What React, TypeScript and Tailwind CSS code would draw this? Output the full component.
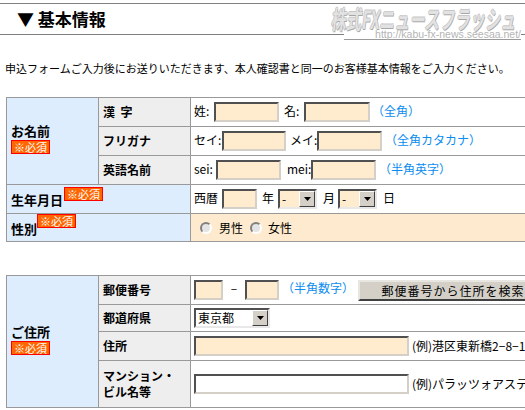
import React from 'react';

const jp = "font-['Noto_Sans_CJK_JP','Noto_Sans',sans-serif]";

const Badge: React.FC<{ className?: string }> = ({ className = '' }) => (
  <span
    className={`inline-block h-[14px] px-[2px] bg-[#ff6600] border border-[#ff0000] text-white text-[11px] leading-[12px] font-normal align-top ${className}`}
  >
    ※必須
  </span>
);

const TextBox: React.FC<{ w: string; white?: boolean }> = ({ w, white }) => (
  <span
    className={`inline-block h-[20px] ${w} ${white ? 'bg-white' : 'bg-[#ffebcd]'} border-2 border-t-[#505050] border-l-[#505050] border-b-[#d4d0c8] border-r-[#d4d0c8] align-middle`}
  />
);

const FakeSelect: React.FC<{ w: string; value: string; white?: boolean }> = ({ w, value, white }) => (
  <span
    className={`inline-flex items-stretch h-[20px] ${w} ${white ? 'bg-white' : 'bg-[#ffebcd]'} border-2 border-t-[#505050] border-l-[#505050] border-b-[#e8e8e8] border-r-[#e8e8e8] align-middle`}
  >
    <span className="flex-1 pl-[2px] text-[12px] leading-[16px] overflow-hidden whitespace-nowrap">{value}</span>
    <span className="w-[16px] bg-[#d4d0c8] border border-t-white border-l-white border-b-[#404040] border-r-[#404040] flex items-center justify-center">
      <svg width="7" height="4" viewBox="0 0 7 4">
        <path d="M0 0h7L3.5 4z" fill="#000" />
      </svg>
    </span>
  </span>
);

const Radio: React.FC = () => (
  <span className="inline-block w-[12px] h-[12px] rounded-full bg-[#e4e4e4] border-2 border-t-[#808080] border-l-[#808080] border-b-white border-r-white align-middle" />
);

const Note: React.FC<{ children: React.ReactNode; className?: string }> = ({ children, className = '' }) => (
  <span className={`text-[#0a8cf0] ${className}`}>{children}</span>
);

const labelCell = 'bg-[#eeeeee] border border-[#999999] pl-[4px] text-[12px] font-bold align-middle';
const headCell = 'bg-[#ddedfd] border border-[#999999] pl-[4px] text-[13px] font-bold align-middle';
const valueCell = 'border border-[#999999] pl-[3px] text-[12px] align-middle whitespace-nowrap';

export default function App() {
  return (
    <div className={`relative w-[525px] h-[410px] overflow-hidden bg-white text-black ${jp}`}>
      {/* title bar */}
      <div className="pt-[3px]">
        <div className="h-[32px] border-y border-[#808080] flex items-center pl-[17px]">
          <span className="text-[17px] leading-[18px] font-bold">▼ 基本情報</span>
        </div>
      </div>

      {/* site logo */}
      <div className="absolute left-[332px] top-[4px] w-[193px] h-[37px] pointer-events-none">
        <div className="h-[28px] whitespace-nowrap">
          <span className="inline-block origin-left scale-x-[0.61] -skew-x-12 text-[25px] leading-[28px] font-bold text-[#e2e2e2] [text-shadow:1px_1px_0_#a6a6a6,-1px_0_0_#bdbdbd,0_-1px_0_#c8c8c8]">
            株式FXニュースフラッシュ
          </span>
        </div>
        <div className="ml-[12px] mr-[4px] bg-white border-b border-[#9a9a9a] h-[8px] flex items-end justify-end">
          <span className="font-['Liberation_Sans',sans-serif] text-[10.5px] leading-[9px] text-[#b4b4b4]">
            http://kabu-fx-news.seesaa.net/
          </span>
        </div>
      </div>

      <p className="mt-[25px] pl-[5px] text-[11px] leading-[16px] whitespace-nowrap">
        申込フォームご入力後にお送りいただきます、本人確認書と同一のお客様基本情報をご入力ください。
      </p>

      {/* name / birthday / sex */}
      <table className="mt-[21px] ml-[6px] w-[560px] table-fixed border-collapse">
        <colgroup>
          <col className="w-[92px]" />
          <col className="w-[92px]" />
          <col />
        </colgroup>
        <tbody>
          <tr className="h-[29px]">
            <td rowSpan={3} className={headCell}>
              <div className="leading-[18px]">お名前</div>
              <Badge />
            </td>
            <td className={labelCell}>漢&nbsp;&nbsp;字</td>
            <td className={valueCell}>
              <span className="inline-block w-[20px]">姓:</span>
              <TextBox w="w-[65px]" />
              <span className="inline-block w-[20px] ml-[5px]">名:</span>
              <TextBox w="w-[66px]" />
              <Note className="ml-[2px]">（全角）</Note>
            </td>
          </tr>
          <tr className="h-[29px]">
            <td className={labelCell}>フリガナ</td>
            <td className={valueCell}>
              <span className="inline-block w-[28px]">セイ:</span>
              <TextBox w="w-[64px]" />
              <span className="inline-block w-[27px] ml-[4px]">メイ:</span>
              <TextBox w="w-[65px]" />
              <Note className="ml-[3px]">（全角カタカナ）</Note>
            </td>
          </tr>
          <tr className="h-[29px]">
            <td className={labelCell}>英語名前</td>
            <td className={valueCell}>
              <span className="inline-block w-[22px]">sei:</span>
              <TextBox w="w-[65px]" />
              <span className="inline-block w-[24px] ml-[6px]">mei:</span>
              <TextBox w="w-[65px]" />
              <Note className="ml-[3px]">（半角英字）</Note>
            </td>
          </tr>
          <tr className="h-[29px]">
            <td colSpan={2} className={headCell}>
              <span className="align-middle">生年月日</span>
              <Badge className="ml-[1px] align-middle -translate-y-[1px]" />
            </td>
            <td className={valueCell}>
              <span className="inline-block w-[28px]">西暦</span>
              <TextBox w="w-[35px]" />
              <span className="inline-block w-[16px] ml-[5px]">年</span>
              <FakeSelect w="w-[39px]" value="-" />
              <span className="inline-block w-[15px] ml-[6px]">月</span>
              <FakeSelect w="w-[39px]" value="-" />
              <span className="ml-[6px]">日</span>
            </td>
          </tr>
          <tr className="h-[28px]">
            <td colSpan={2} className={headCell}>
              <span className="align-middle">性別</span>
              <Badge className="align-middle -translate-y-[3px]" />
            </td>
            <td className={`${valueCell} bg-[#feebcf]`}>
              <span className="ml-[6px]" />
              <Radio />
              <span className="ml-[7px] align-middle">男性</span>
              <span className="ml-[7px]" />
              <Radio />
              <span className="ml-[6px] align-middle">女性</span>
            </td>
          </tr>
        </tbody>
      </table>

      {/* address */}
      <table className="mt-[33px] ml-[6px] w-[560px] table-fixed border-collapse">
        <colgroup>
          <col className="w-[92px]" />
          <col className="w-[92px]" />
          <col />
        </colgroup>
        <tbody>
          <tr className="h-[29px]">
            <td rowSpan={4} className={headCell}>
              <div className="leading-[18px]">ご住所</div>
              <Badge />
            </td>
            <td className={labelCell}>郵便番号</td>
            <td className={valueCell}>
              <TextBox w="w-[29px]" />
              <span className="inline-block w-[22px] text-center">–</span>
              <TextBox w="w-[34px]" />
              <Note className="ml-[3px]">（半角数字）</Note>
              <span className="inline-block ml-[4px] w-[190px] h-[21px] bg-[#d4d0c8] border-2 border-t-[#e8e6e0] border-l-[#e8e6e0] border-b-[#404040] border-r-[#404040] align-middle text-center text-[12px] leading-[17px] tracking-[1px]">
                郵便番号から住所を検索
              </span>
            </td>
          </tr>
          <tr className="h-[27px]">
            <td className={labelCell}>都道府県</td>
            <td className={valueCell}>
              <FakeSelect w="w-[76px]" value="東京都" white />
            </td>
          </tr>
          <tr className="h-[29px]">
            <td className={labelCell}>住所</td>
            <td className={valueCell}>
              <TextBox w="w-[215px]" />
              <span className="ml-[3px] align-middle">(例)港区東新橋2−8−1</span>
            </td>
          </tr>
          <tr className="h-[47px]">
            <td className={`${labelCell} leading-[16px]`}>
              マンション・
              <br />
              ビル名等
            </td>
            <td className={valueCell}>
              <TextBox w="w-[215px]" white />
              <span className="ml-[3px] align-middle">(例)パラッツォアステック4F</span>
            </td>
          </tr>
        </tbody>
      </table>
    </div>
  );
}
